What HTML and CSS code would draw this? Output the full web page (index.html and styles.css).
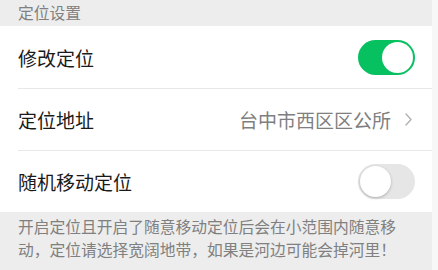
FILE: index.html
```html
<!DOCTYPE html>
<html lang="zh-CN">
<head>
<meta charset="utf-8">
<title>定位设置</title>
<link rel="stylesheet" href="styles.css">
</head>
<body>
<div class="page">
  <div class="group-title">定位设置</div>
  <div class="cells">
    <div class="cell">
      <div class="cell-inner">
        <span class="label">修改定位</span>
        <span class="switch on"><span class="knob"></span></span>
      </div>
    </div>
    <div class="cell">
      <div class="cell-inner bordered">
        <span class="label">定位地址</span>
        <span class="value">台中市西区区公所</span>
        <svg class="chevron" width="7" height="13" viewBox="0 0 7 13"><path d="M1 1 L6 6.5 L1 12" fill="none" stroke="#b2b2b2" stroke-width="1.4" stroke-linecap="round" stroke-linejoin="round"/></svg>
      </div>
    </div>
    <div class="cell">
      <div class="cell-inner bordered">
        <span class="label">随机移动定位</span>
        <span class="switch off"><span class="knob"></span></span>
      </div>
    </div>
  </div>
  <div class="tips">开启定位且开启了随意移动定位后会在小范围内随意移动，定位请选择宽阔地带，如果是河边可能会掉河里！</div>
</div>
</body>
</html>
```
FILE: styles.css
```css
html, body {
  margin: 0;
  padding: 0;
}
body {
  background: #f7f7f7;
  font-family: "Noto Sans CJK SC", "Noto Sans", sans-serif;
}
.page {
  width: 432px;
  height: 270px;
  background: #ededed;
  overflow: hidden;
}
.group-title {
  height: 26px;
  line-height: 26px;
  padding-left: 18px;
  font-size: 15.75px;
  color: #808080;
  overflow: hidden;
}
.cells {
  background: #ffffff;
}
.cell {
  padding-left: 18px;
}
.cell-inner {
  display: flex;
  align-items: center;
  height: 62px;
  padding-right: 17px;
  box-sizing: border-box;
}
.cell-inner.bordered {
  border-top: 1px solid #e8e8e8;
}
.label {
  flex: 1;
  font-size: 19px;
  color: #1a1a1a;
}
.value {
  font-size: 19px;
  color: #7f7f7f;
  margin-right: 14px;
}
.chevron {
  display: block;
  margin-right: 3px;
}
.switch {
  display: flex;
  align-items: center;
  width: 57px;
  height: 35px;
  border-radius: 18px;
  box-sizing: border-box;
  padding: 2px;
}
.switch.on {
  background: #07c160;
  justify-content: flex-end;
}
.switch.off {
  background: #e6e6e6;
  justify-content: flex-start;
}
.knob {
  width: 31px;
  height: 31px;
  border-radius: 50%;
  background: #ffffff;
}
.switch.off .knob {
  box-shadow: 0 1px 3px rgba(0, 0, 0, 0.25);
}
.tips {
  padding: 3px 30px 0 18px;
  font-size: 15.75px;
  line-height: 23px;
  color: #808080;
}
```
